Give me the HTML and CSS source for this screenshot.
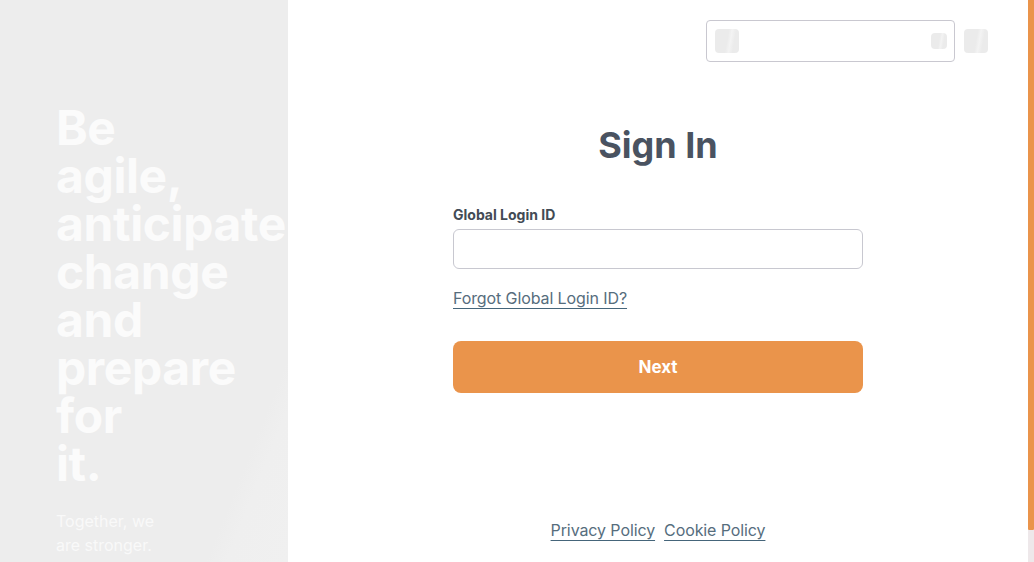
FILE: index.html
```html
<!DOCTYPE html>
<html lang="en">
<head>
<meta charset="utf-8">
<title>Sign In</title>
<link rel="stylesheet" href="styles.css">
</head>
<body>
<div class="page">
  <aside class="hero">
    <h1 class="hero-title">Be<br>agile,<br>anticipate<br>change<br>and<br>prepare<br>for<br>it.</h1>
    <p class="hero-sub">Together, we<br>are stronger.</p>
  </aside>
  <main class="main">
    <header class="topbar">
      <div class="selector">
        <span class="ph ph-lg"></span>
        <span class="ph ph-sm"></span>
      </div>
      <span class="ph ph-lg"></span>
    </header>
    <section class="signin">
      <h2 class="title">Sign In</h2>
      <form class="form">
        <label class="label" for="gid">Global Login ID</label>
        <input class="input" id="gid" type="text">
        <a class="link forgot" href="#">Forgot Global Login ID?</a>
        <button class="btn" type="button">Next</button>
      </form>
    </section>
    <footer class="footer">
      <a class="link" href="#">Privacy Policy</a>
      <a class="link" href="#">Cookie Policy</a>
    </footer>
  </main>
  <div class="scrollbar"><div class="thumb"></div><div class="track"></div></div>
</div>
</body>
</html>
```

FILE: styles.css
```css
* { box-sizing: border-box; }
html, body { margin: 0; padding: 0; height: 100%; overflow: hidden; background: #fff; }
body { font-family: Inter, "Noto Sans", "Liberation Sans", sans-serif; }

.page { display: flex; height: 562px; }

.hero {
  width: 288px;
  flex: none;
  background: linear-gradient(112deg, #ededed 0%, #ededed 84%, #efefef 88%, #f0f0f0 100%);
  padding: 104px 0 0 56px;
  overflow: hidden;
  color: #fbfbfb;
  display: flex;
  flex-direction: column;
}
.hero-title {
  margin: 0;
  font-size: 48px;
  line-height: 48px;
  font-weight: 700;
  letter-spacing: -0.4px;
  white-space: nowrap;
}
.hero-sub {
  margin: 21px 0 0;
  font-size: 16px;
  line-height: 24px;
  font-weight: 400;
  color: #f9f9f9;
}

.main { flex: 1; display: flex; flex-direction: column; }

.topbar {
  display: flex;
  justify-content: flex-end;
  align-items: center;
  gap: 9px;
  padding: 20px 40px 0 0;
}
.selector {
  width: 249px;
  height: 42px;
  border: 1px solid #c9c8d0;
  border-radius: 4px;
  display: flex;
  align-items: center;
  justify-content: space-between;
  padding: 0 7px 0 8px;
}
.ph {
  display: block;
  border-radius: 4px;
  background: linear-gradient(100deg, #ebebeb 0%, #ebebeb 50%, #f3f3f3 62%, #ebebeb 76%, #ebebeb 100%);
}
.ph-lg { width: 24px; height: 24px; }
.ph-sm { width: 16px; height: 16px; }

.signin { display: flex; flex-direction: column; align-items: center; }
.title {
  margin: 61px 0 0;
  font-size: 36px;
  line-height: 44px;
  font-weight: 700;
  color: #4a5361;
}
.form { width: 410px; display: flex; flex-direction: column; margin-top: 38px; }
.label {
  font-size: 14px;
  line-height: 20px;
  font-weight: 700;
  color: #434b55;
}
.input {
  margin-top: 4px;
  height: 40px;
  border: 1px solid #c8c8d0;
  border-radius: 6px;
  outline: none;
  font: inherit;
  padding: 0 12px;
}
.link {
  font-size: 16px;
  line-height: 24px;
  color: #566d7d;
  text-decoration: underline;
  text-decoration-color: #45657a;
  text-underline-offset: 4px;
  text-decoration-thickness: 1px;
  letter-spacing: -0.1px;
}
.forgot { margin-top: 17px; align-self: flex-start; }
.btn {
  margin-top: 31px;
  height: 52px;
  border: 0;
  border-radius: 8px;
  background: #ea944b;
  color: #fff;
  font: inherit;
  font-size: 17px;
  font-weight: 700;
}

.footer {
  margin-top: auto;
  margin-bottom: 20px;
  display: flex;
  justify-content: center;
  gap: 9px;
}

.scrollbar { width: 6px; flex: none; display: flex; flex-direction: column; }
.thumb { height: 530px; background: #ea944b; border-radius: 0 0 1px 1px; }
.track { flex: 1; background: #eee8ea; }
```
